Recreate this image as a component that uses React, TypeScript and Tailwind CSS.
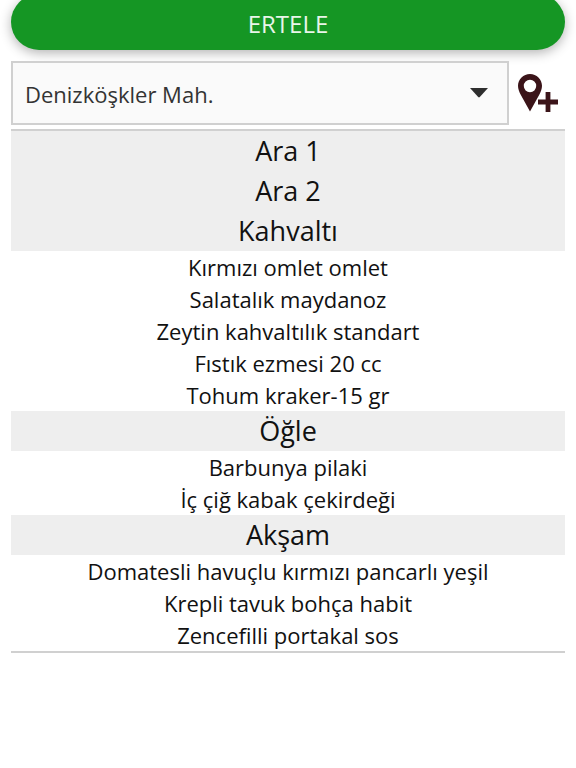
import { ChangeEvent, useState } from "react";

const addresses = ["Denizköşkler Mah."];

const meals = [
    { title: "Ara 1", items: [] },
    { title: "Ara 2", items: [] },
    {
        title: "Kahvaltı",
        items: [
            "Kırmızı omlet omlet",
            "Salatalık maydanoz",
            "Zeytin kahvaltılık standart",
            "Fıstık ezmesi 20 cc",
            "Tohum kraker-15 gr",
        ],
    },
    { title: "Öğle", items: ["Barbunya pilaki", "İç çiğ kabak çekirdeği"] },
    {
        title: "Akşam",
        items: [
            "Domatesli havuçlu kırmızı pancarlı yeşil",
            "Krepli tavuk bohça habit",
            "Zencefilli portakal sos",
        ],
    },
];

function AddLocationIcon() {
    return (
        <svg width="40" height="38" viewBox="0 0 40 38" fill="#3b1419" aria-hidden="true">
            <path
                fillRule="evenodd"
                d="M12 0C5.4 0 0 5.2 0 11.8C0 15 1.2 17.8 2.6 20.6L12 37.5L21.4 20.6C22.8 17.8 24 15 24 11.8C24 5.2 18.6 0 12 0ZM12 5.8A6.2 6.2 0 1 1 12 18.2A6.2 6.2 0 1 1 12 5.8Z"
            />
            <path d="M27.6 18H32.4V25.6H40V30.4H32.4V38H27.6V30.4H20V25.6H27.6Z" />
        </svg>
    );
}

function AddressPicker() {
    const [address, setAddress] = useState(addresses[0]);

    return (
        <div className="mt-[11px] flex items-center gap-[9px]">
            <div className="relative flex-1">
                <select
                    aria-label="Adres"
                    value={address}
                    onChange={(e: ChangeEvent<HTMLSelectElement>) => setAddress(e.target.value)}
                    className="block h-16 w-full appearance-none border-2 border-[#d0d0d0] bg-[#fafafa] pt-0.5 pr-12 pl-3 text-[22px] text-[#333333]"
                >
                    {addresses.map((name) => (
                        <option key={name}>{name}</option>
                    ))}
                </select>
                <svg
                    width="18"
                    height="10"
                    viewBox="0 0 18 10"
                    fill="#2e2e2e"
                    aria-hidden="true"
                    className="pointer-events-none absolute top-[27px] right-[21px]"
                >
                    <path d="M0 0H18L9.8 9Q9 9.8 8.2 9Z" />
                </svg>
            </div>
            <button type="button" aria-label="Adres ekle" className="w-[47px]">
                <AddLocationIcon />
            </button>
        </div>
    );
}

export default function App() {
    return (
        <main className="min-h-screen overflow-hidden bg-white px-[11px] font-['Open_Sans',sans-serif] text-[#111111]">
            <button
                type="button"
                className="-mt-1.5 block h-14 w-full rounded-full bg-[#159624] pt-1 text-2xl text-[#e8f5e9] shadow-[0_3px_12px_rgba(0,0,0,0.3)]"
            >
                ERTELE
            </button>

            <AddressPicker />

            {/* MENU */}
            <div className="mt-1 border-y-2 border-[#d0d0d0] text-center">
                {meals.map((meal) => (
                    <section key={meal.title}>
                        <h2 className="bg-[#eeeeee] text-[27px] leading-10">{meal.title}</h2>
                        {meal.items.length > 0 && (
                            <ul className="text-[22px] leading-8">
                                {meal.items.map((item) => (
                                    <li key={item}>{item}</li>
                                ))}
                            </ul>
                        )}
                    </section>
                ))}
            </div>
        </main>
    );
}
